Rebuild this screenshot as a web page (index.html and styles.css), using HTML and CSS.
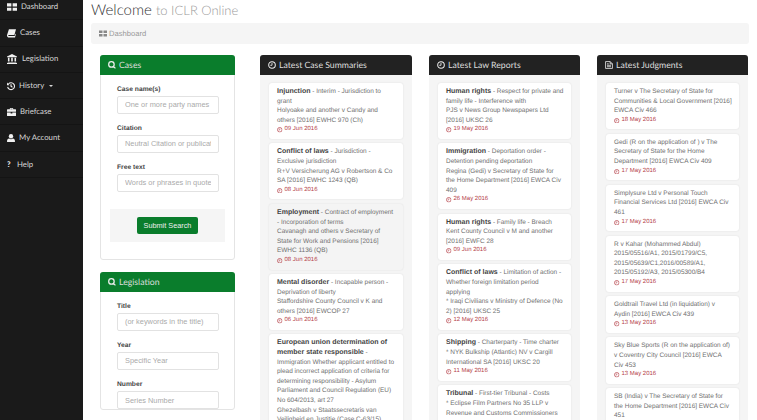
FILE: index.html
```html
<!DOCTYPE html>
<html lang="en">
<head>
<meta charset="utf-8">
<title>ICLR Online</title>
<link rel="stylesheet" href="styles.css">
</head>
<body>
<svg class="sprite" xmlns="http://www.w3.org/2000/svg">
  <symbol id="i-grid" viewBox="0 0 16 14"><path d="M0 1h7v5H0zM9 1h7v5H9zM0 8h7v5H0zM9 8h7v5H9z"/></symbol>
  <symbol id="i-book" viewBox="0 0 14 14"><path d="M3 1h11l-2.500 9H2.600c-.6 0-.8.4-.7.8.1.5.5.7 1 .7H12l1-3.400.8.5L12.500 14H3C1.500 14 .3 12.800 0 11.200-.1 10.600 0 10 .3 9.400z"/></symbol>
  <symbol id="i-bank" viewBox="0 0 16 16"><path d="M8 0l8 4v1H0V4zM1.500 6h2.500v6H1.500zM6.700 6h2.600v6H6.700zM12 6h2.500v6H12zM1 13h14v1H1zM0 14.500h16V16H0z"/></symbol>
  <symbol id="i-history" viewBox="0 0 14 14"><path fill="none" stroke="currentColor" stroke-width="2" d="M2.500 3.500A6 6 0 1 1 1.200 8.500M7 3.800V7.500l2.500 1.500"/><path d="M0 1l4.500 4.500H0z"/></symbol>
  <symbol id="i-case" viewBox="0 0 16 14"><path d="M5 2V1c0-.6.4-1 1-1h4c.6 0 1 .4 1 1v1h4c.6 0 1 .4 1 1v3.500H0V3c0-.6.4-1 1-1zM6.300 1.300V2h3.400v-.7zM0 7.800h6.500V9.500h3V7.800H16V13c0 .6-.4 1-1 1H1c-.6 0-1-.4-1-1z"/></symbol>
  <symbol id="i-user" viewBox="0 0 14 14"><circle cx="7" cy="4" r="3.800"/><path d="M1 14c-.6 0-1-.4-1-1 0-3 1.500-5 3.800-5 .9.600 2 1 3.200 1s2.300-.4 3.200-1C12.500 8 14 10 14 13c0 .6-.4 1-1 1z"/></symbol>
  <symbol id="i-search" viewBox="0 0 14 14"><path fill="none" stroke="currentColor" stroke-width="2.200" d="M6 1.200a4.800 4.800 0 1 0 0 9.600a4.800 4.800 0 1 0 0-9.600zM9.500 9.500L13 13"/></symbol>
  <symbol id="i-clock" viewBox="0 0 14 14"><circle cx="7" cy="7" r="5.800" fill="none" stroke="currentColor" stroke-width="1.800"/><path fill="none" stroke="currentColor" stroke-width="1.500" d="M7 3.500V7.500H4"/></symbol>
  <symbol id="i-doc" viewBox="0 0 14 14"><path fill="none" stroke="currentColor" stroke-width="1.400" d="M1 1h8l4 4v8H1zM9 1v4h4M3.500 7.500h7M3.500 10h7M3.500 5h3"/></symbol>
</svg>
<div class="app">
  <nav class="sidebar">
    <a class="nav-item"><svg class="nav-icon w-11"><use href="#i-grid"/></svg>Dashboard</a>
    <a class="nav-item"><svg class="nav-icon w-9"><use href="#i-book"/></svg>Cases</a>
    <a class="nav-item"><svg class="nav-icon w-11 gap-l"><use href="#i-bank"/></svg>Legislation</a>
    <a class="nav-item"><svg class="nav-icon w-8"><use href="#i-history"/></svg>History <span class="caret"></span></a>
    <a class="nav-item"><svg class="nav-icon w-9"><use href="#i-case"/></svg>Briefcase</a>
    <a class="nav-item"><svg class="nav-icon w-7"><use href="#i-user"/></svg>My Account</a>
    <a class="nav-item"><span class="nav-q">?</span>Help</a>
  </nav>
  <main class="main">
    <h1 class="page-title">Welcome <small>to ICLR Online</small></h1>
    <div class="breadcrumb"><svg class="crumb-icon"><use href="#i-grid"/></svg>Dashboard</div>
    <div class="columns">
      <div class="search-col">
        <section class="panel">
          <h2 class="panel-head green"><svg class="head-icon"><use href="#i-search"/></svg>Cases</h2>
          <form class="search-form">
            <label class="field">Case name(s)<input type="text" placeholder="One or more party names"></label>
            <label class="field">Citation<input type="text" placeholder="Neutral Citation or publication"></label>
            <label class="field">Free text<input type="text" placeholder="Words or phrases in quotes"></label>
            <div class="well"><button type="button" class="btn">Submit Search</button></div>
          </form>
        </section>
        <section class="panel">
          <h2 class="panel-head green"><svg class="head-icon"><use href="#i-search"/></svg>Legislation</h2>
          <form class="search-form">
            <label class="field">Title<input type="text" placeholder="(or keywords in the title)"></label>
            <label class="field">Year<input type="text" placeholder="Specific Year"></label>
            <label class="field">Number<input type="text" placeholder="Series Number"></label>
          </form>
        </section>
      </div>

      <section class="feed">
        <h2 class="panel-head dark"><svg class="head-icon"><use href="#i-clock"/></svg>Latest Case Summaries</h2>
        <div class="feed-body">
          <article class="card"><b>Injunction</b> - Interim - Jurisdiction to grant<br>Holyoake and another v Candy and others [2016] EWHC 970 (Ch)<div class="date"><svg class="date-icon"><use href="#i-clock"/></svg>09 Jun 2016</div></article>
          <article class="card"><b>Conflict of laws</b> - Jurisdiction - Exclusive jurisdiction<br>R+V Versicherung AG v Robertson &amp; Co SA [2016] EWHC 1243 (QB)<div class="date"><svg class="date-icon"><use href="#i-clock"/></svg>08 Jun 2016</div></article>
          <article class="card hover"><b>Employment</b> - Contract of employment - Incorporation of terms<br>Cavanagh and others v Secretary of State for Work and Pensions [2016] EWHC 1136 (QB)<div class="date"><svg class="date-icon"><use href="#i-clock"/></svg>08 Jun 2016</div></article>
          <article class="card"><b>Mental disorder</b> - Incapable person - Deprivation of liberty<br>Staffordshire County Council v K and others [2016] EWCOP 27<div class="date"><svg class="date-icon"><use href="#i-clock"/></svg>06 Jun 2016</div></article>
          <article class="card"><b>European union determination of member state responsible</b> - Immigration Whether applicant entitled to plead incorrect application of criteria for determining responsibility - Asylum Parliament and Council Regulation (EU) No 604/2013, art 27<br>Ghezelbash v Staatssecretaris van Veiligheid en Justitie (Case C-63/15)</article>
        </div>
      </section>

      <section class="feed">
        <h2 class="panel-head dark"><svg class="head-icon"><use href="#i-clock"/></svg>Latest Law Reports</h2>
        <div class="feed-body">
          <article class="card"><b>Human rights</b> - Respect for private and family life - Interference with<br>PJS v News Group Newspapers Ltd [2016] UKSC 26<div class="date"><svg class="date-icon"><use href="#i-clock"/></svg>19 May 2016</div></article>
          <article class="card"><b>Immigration</b> - Deportation order - Detention pending deportation<br>Regina (Gedi) v Secretary of State for the Home Department [2016] EWCA Civ 409<div class="date"><svg class="date-icon"><use href="#i-clock"/></svg>26 May 2016</div></article>
          <article class="card"><b>Human rights</b> - Family life - Breach<br>Kent County Council v M and another [2016] EWFC 28<div class="date"><svg class="date-icon"><use href="#i-clock"/></svg>09 Jun 2016</div></article>
          <article class="card"><b>Conflict of laws</b> - Limitation of action - Whether foreign limitation period applying<br>* Iraqi Civilians v Ministry of Defence (No 2) [2016] UKSC 25<div class="date"><svg class="date-icon"><use href="#i-clock"/></svg>12 May 2016</div></article>
          <article class="card"><b>Shipping</b> - Charterparty - Time charter<br>* NYK Bulkship (Atlantic) NV v Cargill International SA [2016] UKSC 20<div class="date"><svg class="date-icon"><use href="#i-clock"/></svg>11 May 2016</div></article>
          <article class="card"><b>Tribunal</b> - First-tier Tribunal - Costs<br>* Eclipse Film Partners No 35 LLP v Revenue and Customs Commissioners</article>
        </div>
      </section>

      <section class="feed">
        <h2 class="panel-head dark"><svg class="head-icon"><use href="#i-doc"/></svg>Latest Judgments</h2>
        <div class="feed-body">
          <article class="card">Turner v The Secretary of State for Communities &amp; Local Government [2016] EWCA Civ 466<div class="date"><svg class="date-icon"><use href="#i-clock"/></svg>18 May 2016</div></article>
          <article class="card">Gedi (R on the application of ) v The Secretary of State for the Home Department [2016] EWCA Civ 409<div class="date"><svg class="date-icon"><use href="#i-clock"/></svg>17 May 2016</div></article>
          <article class="card">Simplysure Ltd v Personal Touch Financial Services Ltd [2016] EWCA Civ 461<div class="date"><svg class="date-icon"><use href="#i-clock"/></svg>17 May 2016</div></article>
          <article class="card">R v Kahar (Mohammed Abdul) 2015/05516/A1, 2015/01799/C5, 2015/05639/C1,2016/00589/A1, 2015/05192/A3, 2015/05300/B4<div class="date"><svg class="date-icon"><use href="#i-clock"/></svg>17 May 2016</div></article>
          <article class="card">Goldtrail Travel Ltd (in liquidation) v Aydin [2016] EWCA Civ 439<div class="date"><svg class="date-icon"><use href="#i-clock"/></svg>13 May 2016</div></article>
          <article class="card">Sky Blue Sports (R on the application of) v Coventry City Council [2016] EWCA Civ 453<div class="date"><svg class="date-icon"><use href="#i-clock"/></svg>13 May 2016</div></article>
          <article class="card">SB (India) v The Secretary of State for the Home Department [2016] EWCA Civ 451</article>
        </div>
      </section>
    </div>
  </main>
</div>
</body>
</html>
```

FILE: styles.css
```css
* { box-sizing: border-box; }
html, body { margin: 0; height: 100%; overflow: hidden; background: #fff; }
body { font-family: "Liberation Sans", Arial, sans-serif; font-size: 6.45px; line-height: 9.6px; color: #707070; text-rendering: geometricPrecision; }
.sprite { display: none; }
svg { fill: currentColor; }

.app { display: flex; height: 420px; overflow: hidden; }

.sidebar { flex: 0 0 83px; background: #1a1a1a; margin-top: -6px; padding-bottom: 6px; }
.nav-item { display: flex; align-items: center; height: 26.3px; padding-left: 7px; gap: 4px; color: #d8d8d8; font-family: Lato, sans-serif; font-size: 7.8px; border-bottom: 1px solid #141414; }
.nav-icon { height: 10px; color: #f0f0f0; flex: none; }
.w-11 { width: 10px; }
.w-9 { width: 9px; }
.w-8 { width: 8px; }
.w-7 { width: 8px; }
.gap-l { margin-right: 1px; width: 10px; }
.nav-q { width: 6px; font-weight: 700; color: #f0f0f0; }
.caret { width: 0; height: 0; margin-left: 1px; border: 2px solid transparent; border-top-color: #d8d8d8; border-bottom-width: 0; }

.main { flex: 1; min-width: 0; padding: 0 8px; }
.page-title { margin: 0; height: 23px; font-family: Lato, sans-serif; font-weight: 300; font-size: 15px; line-height: 21px; color: #333; white-space: nowrap; }
.page-title small { font-size: 13px; color: #9a9a9a; }
.breadcrumb { height: 21px; display: flex; align-items: center; padding-left: 8px; gap: 2px; background: #f5f5f5; border-radius: 3px; color: #999; font-size: 7.6px; }
.crumb-icon { width: 8px; height: 7px; color: #888; }

.columns { display: grid; grid-template-columns: 143px 152px 151px 151px; column-gap: 17px; margin: 11px 0 0 9px; }
.search-col { display: flex; flex-direction: column; gap: 12px; width: 135px; }
.panel { border: 1px solid #e4e4e4; border-radius: 3px; background: #fff; }
.panel-head { display: flex; align-items: center; gap: 3px; height: 20px; margin: 0; padding-left: 8px; font-family: Lato, sans-serif; font-weight: 400; font-size: 8.7px; color: #ddd; border-radius: 3px 3px 0 0; }
.green { background: #0a7d2c; margin: -1px -1px 0; }
.dark { background: #222; }
.head-icon { width: 8px; height: 8px; flex: none; color: #eee; }

.search-form { padding: 10px 16px 0; display: flex; flex-direction: column; gap: 10.5px; }
.field { display: flex; flex-direction: column; gap: 1px; font-weight: 700; font-size: 6.7px; color: #444; }
.field input { height: 18px; width: 102px; padding: 0 7px; border: 1px solid #e2e2e2; border-radius: 2px; background: #fff; font: 7.4px "Liberation Sans", Arial, sans-serif; outline: none; }
.field input::placeholder { color: #aaa; opacity: 1; }
.well { display: flex; justify-content: center; align-items: center; height: 33px; margin: 7px -7px 17px; background: #f5f5f5; }
.btn { width: 61px; height: 17px; padding: 0; border: 0; border-radius: 2px; background: #0a7d2c; color: #eee; font: 7.3px "Liberation Sans", Arial, sans-serif; }

.feed { background: #f5f5f5; border-radius: 3px; min-height: 400px; }
.feed-body { padding: 8px 9px; display: flex; flex-direction: column; gap: 4.500px; }
.card { padding: 4px 7px 4px 8px; background: #fff; border-radius: 3px; box-shadow: 0 0 2px rgba(0,0,0,.1); }
.card b { color: #444; font-size: 7px; }
.card.hover { background: #f4f4f4; }
.date { display: flex; align-items: center; gap: 2px; font-size: 6px; color: #b5434a; }
.date-icon { width: 5.500px; height: 5.500px; flex: none; }
```
